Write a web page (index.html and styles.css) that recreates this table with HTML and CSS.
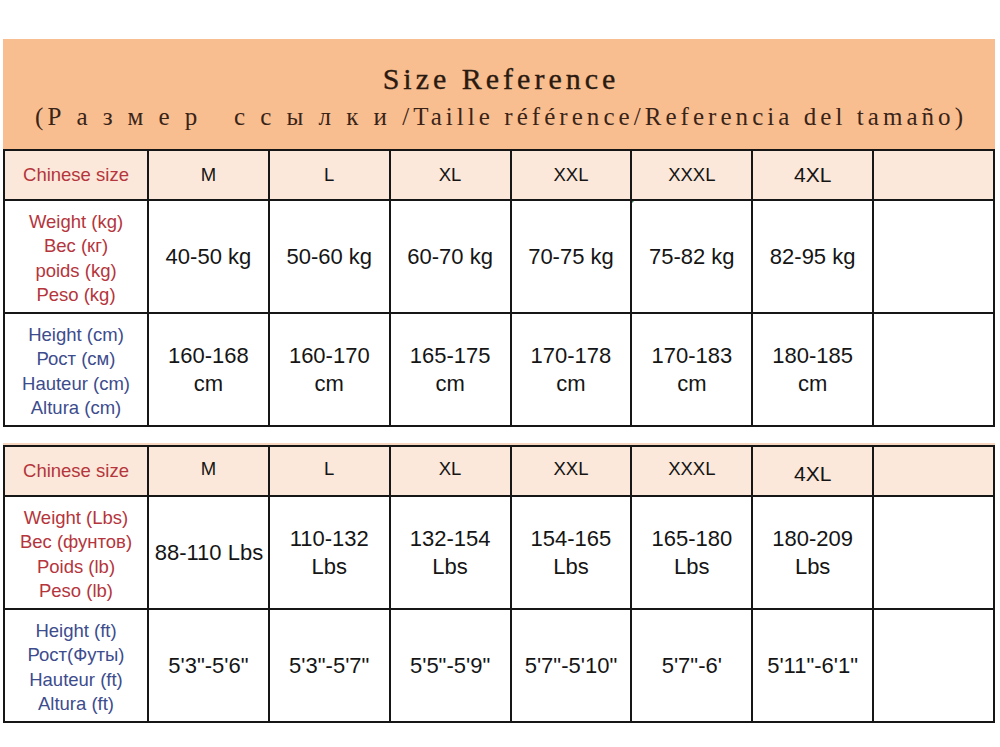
FILE: index.html
```html
<!DOCTYPE html>
<html lang="en">
<head>
<meta charset="utf-8">
<title>Size Reference</title>
<link rel="stylesheet" href="styles.css">
</head>
<body>
<div class="page">
  <section class="chart">
    <header class="band">
      <h1 class="title">Size Reference</h1>
      <p class="subtitle">(<span class="wide">Размер ссылки</span>/Taille référence/Referencia del tamaño)</p>
    </header>
    <table class="grid">
      <colgroup>
        <col class="c-label"><col><col><col><col><col><col><col>
      </colgroup>
      <tr class="head">
        <td class="red">Chinese size</td>
        <td>M</td><td>L</td><td>XL</td><td>XXL</td><td>XXXL</td><td class="big">4XL</td><td></td>
      </tr>
      <tr class="row">
        <td class="label red">Weight (kg)<br>Вес (кг)<br>poids (kg)<br>Peso (kg)</td>
        <td class="val">40-50 kg</td><td class="val">50-60 kg</td><td class="val">60-70 kg</td><td class="val">70-75 kg</td><td class="val mark">75-82 kg</td><td class="val">82-95 kg</td><td></td>
      </tr>
      <tr class="row">
        <td class="label blue">Height (cm)<br>Рост (см)<br>Hauteur (cm)<br>Altura (cm)</td>
        <td class="val">160-168<br>cm</td><td class="val">160-170<br>cm</td><td class="val">165-175<br>cm</td><td class="val">170-178<br>cm</td><td class="val">170-183<br>cm</td><td class="val">180-185<br>cm</td><td></td>
      </tr>
    </table>
  </section>

  <section class="chart second">
    <table class="grid">
      <colgroup>
        <col class="c-label"><col><col><col><col><col><col><col>
      </colgroup>
      <tr class="head">
        <td class="red">Chinese size</td>
        <td class="up">M</td><td class="up">L</td><td class="up">XL</td><td class="up">XXL</td><td class="up">XXXL</td><td class="big down">4XL</td><td></td>
      </tr>
      <tr class="row">
        <td class="label red">Weight (Lbs)<br>Вес (фунтов)<br>Poids (lb)<br>Peso (lb)</td>
        <td class="val tight">88-110 Lbs</td><td class="val">110-132<br>Lbs</td><td class="val">132-154<br>Lbs</td><td class="val">154-165<br>Lbs</td><td class="val">165-180<br>Lbs</td><td class="val">180-209<br>Lbs</td><td></td>
      </tr>
      <tr class="row">
        <td class="label blue">Height (ft)<br>Рост(Футы)<br>Hauteur (ft)<br>Altura (ft)</td>
        <td class="val">5'3"-5'6"</td><td class="val">5'3"-5'7"</td><td class="val">5'5"-5'9"</td><td class="val">5'7"-5'10"</td><td class="val">5'7"-6'</td><td class="val">5'11"-6'1"</td><td></td>
      </tr>
    </table>
  </section>
</div>
</body>
</html>
```

FILE: styles.css
```css
html, body {
  margin: 0;
  padding: 0;
  background: #ffffff;
}

.page {
  width: 1000px;
  height: 747px;
  padding: 39px 0 0 3px;
  box-sizing: border-box;
  overflow: hidden;
}

.chart {
  width: 992px;
}

.band {
  background: #f8be90;
  height: 110px;
  display: flex;
  flex-direction: column;
  align-items: center;
  box-sizing: border-box;
  padding-top: 21px;
  color: #2b1a10;
  font-family: "Liberation Serif", "Times New Roman", serif;
}

.title {
  margin: 0;
  font-size: 30px;
  font-weight: normal;
  line-height: 38px;
  letter-spacing: 4px;
  margin-left: 4px;
  -webkit-text-stroke: 0.35px #2b1a10;
}

.subtitle {
  margin: 0;
  font-size: 25px;
  line-height: 32px;
  margin-top: 3px;
  margin-left: 4px;
  letter-spacing: 4.05px;
  color: #3a2417;
}

.wide {
  letter-spacing: 15.2px;
}

.grid {
  width: 992px;
  table-layout: fixed;
  border-collapse: collapse;
  font-family: "Liberation Sans", Arial, sans-serif;
  color: #151515;
}

.grid col.c-label {
  width: 144px;
}

.grid td {
  border: 2px solid #161616;
  padding: 0;
  text-align: center;
  vertical-align: middle;
  overflow: hidden;
}

.head td {
  background: #fce8da;
  height: 48px;
  font-size: 18.5px;
}

.head td.big {
  font-size: 21px;
}

.head td.up {
  height: 44px;
  padding-bottom: 4px;
}

.head td.down {
  height: 42px;
  padding-top: 6px;
}

.row td {
  height: 111px;
  background: #ffffff;
}

.label {
  font-size: 18.5px;
  line-height: 24.5px;
  padding-top: 4px !important;
}

.row td.label {
  height: 107px;
}

.red {
  color: #b5353c;
}

.blue {
  color: #3d4c8d;
}

.val {
  font-size: 22px;
  line-height: 28px;
}

.tight {
  white-space: nowrap;
  text-align: left;
  padding-left: 1px !important;
}

.second {
  margin-top: 16px;
  border-top: 2px solid #f7d6bf;
}

.mark {
  position: relative;
}

.mark::before {
  content: "";
  position: absolute;
  left: -1px;
  top: -1px;
  width: 0;
  height: 0;
  border-top: 4px solid #3d7a44;
  border-right: 4px solid transparent;
}
```
